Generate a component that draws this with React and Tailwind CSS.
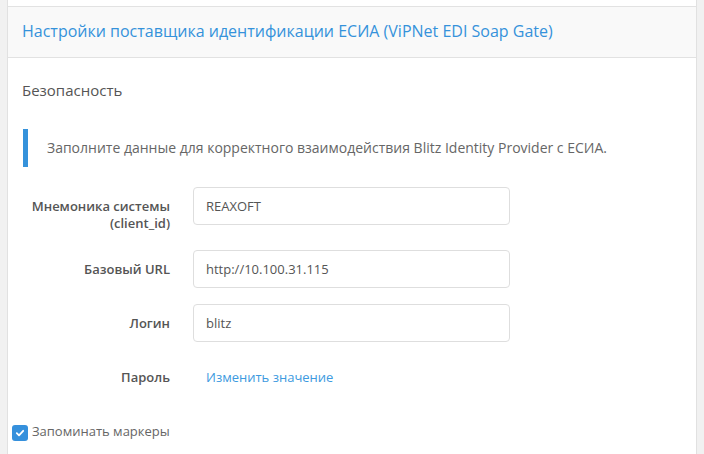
import React from "react";

const fields = [
  { label: ["Мнемоника системы", "(client_id)"], value: "REAXOFT", mt: "mt-0" },
  { label: ["Базовый URL"], value: "http://10.100.31.115", mt: "mt-[18px]" },
  { label: ["Логин"], value: "blitz", mt: "mt-[16px]" },
];

function FieldLabel({ lines }) {
  return (
    <div className="w-[148px] shrink-0 pt-[11px] text-right text-[13px] leading-[17px] font-semibold text-[#555555]">
      {lines.map((l) => (
        <div key={l}>{l}</div>
      ))}
    </div>
  );
}

function CheckMark() {
  return (
    <svg width="10" height="10" viewBox="0 0 10 10" fill="none">
      <path d="M1.8 5.2 L4 7.3 L8.2 2.8" stroke="#ffffff" strokeWidth="1.8" strokeLinecap="round" strokeLinejoin="round" />
    </svg>
  );
}

export default function App() {
  return (
    <div
      className="min-h-[454px] w-[704px] bg-[#f1f1f1] px-[7px]"
      style={{ fontFamily: '"Open Sans", "Noto Sans", sans-serif' }}
    >
      <div className="min-h-[454px] border-x border-[#e1e1e1] bg-white pt-[6px]">
        <div className="border-y border-[#e2e2e2] bg-[#f9f9f9] px-[14px] pt-[13px] pb-[15px]">
          <h2 className="text-[16px] leading-[22px] font-normal text-[#3592db]">
            Настройки поставщика идентификации ЕСИА (ViPNet EDI Soap Gate)
          </h2>
        </div>

        <div className="px-[14px] pt-[22px]">
          <h3 className="text-[15px] leading-[21px] text-[#555555]">Безопасность</h3>

          <div className="mt-[28px] ml-[1px] border-l-[5px] border-[#3592db] py-[9px] pl-[19px] text-[14px] leading-[20px] text-[#666666]">
            Заполните данные для корректного взаимодействия Blitz Identity Provider с ЕСИА.
          </div>

          <div className="mt-[20px] flex flex-col">
            {fields.map((f) => (
              <div key={f.value} className={`flex items-start ${f.mt}`}>
                <FieldLabel lines={f.label} />
                <div className="ml-[23px] flex h-[38px] w-[317px] items-center rounded-[4px] border border-[#dedede] bg-white px-[12px] text-[13px] leading-[20px] text-[#555555]">
                  {f.value}
                </div>
              </div>
            ))}

            <div className="mt-[16px] flex items-start">
              <FieldLabel lines={["Пароль"]} />
              <div className="ml-[23px] flex h-[38px] items-center pl-[13px] text-[13px] leading-[20px]">
                <a href="#" className="text-[#3d9ae0]">
                  Изменить значение
                </a>
              </div>
            </div>
          </div>
        </div>

        <label className="mt-[25px] flex items-start pl-[4px] text-[13px] leading-[20px] text-[#666666]">
          <span className="mt-[4px] flex h-[16px] w-[16px] items-center justify-center rounded-[3px] bg-[#3590dc]">
            <CheckMark />
          </span>
          <span className="ml-[4px]">Запоминать маркеры</span>
        </label>
      </div>
    </div>
  );
}
